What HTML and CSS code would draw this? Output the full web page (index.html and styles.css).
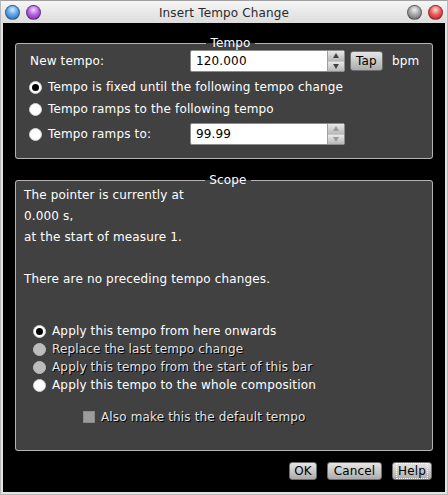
FILE: index.html
```html
<!DOCTYPE html>
<html lang="en">
<head>
  <meta charset="UTF-8">
  <title>Insert Tempo Change</title>
  <link rel="stylesheet" href="styles.css">
</head>
<body>
  <div class="window">
    <div class="titlebar">
      <div class="lights">
        <span class="light blue"></span>
        <span class="light purple"></span>
      </div>
      <div class="title">Insert Tempo Change</div>
      <div class="lights">
        <span class="light grey"></span>
        <span class="light red"></span>
      </div>
    </div>

    <div class="client">
      <fieldset class="group tempo">
        <legend>Tempo</legend>
        <div class="row row-first">
          <span class="label">New tempo:</span>
          <div class="spin">
            <span class="spin-value">120.000</span>
            <span class="spin-arrows"><i class="up"></i><i class="down"></i></span>
          </div>
          <span class="button tap">Tap</span>
          <span class="unit">bpm</span>
        </div>
        <div class="row radio-row">
          <span class="radio checked"></span>
          <span>Tempo is fixed until the following tempo change</span>
        </div>
        <div class="row radio-row">
          <span class="radio"></span>
          <span>Tempo ramps to the following tempo</span>
        </div>
        <div class="row row-last">
          <div class="radio-label">
            <span class="radio"></span>
            <span>Tempo ramps to:</span>
          </div>
          <div class="spin">
            <span class="spin-value">99.99</span>
            <span class="spin-arrows faded"><i class="up"></i><i class="down"></i></span>
          </div>
        </div>
      </fieldset>

      <fieldset class="group scope">
        <legend>Scope</legend>
        <div class="info">
          <p>The pointer is currently at</p>
          <p>0.000 s,</p>
          <p>at the start of measure 1.</p>
          <p>&nbsp;</p>
          <p>There are no preceding tempo changes.</p>
        </div>
        <div class="choices">
          <div class="choice"><span class="radio checked"></span><span>Apply this tempo from here onwards</span></div>
          <div class="choice disabled"><span class="radio"></span><span>Replace the last tempo change</span></div>
          <div class="choice disabled"><span class="radio"></span><span>Apply this tempo from the start of this bar</span></div>
          <div class="choice"><span class="radio"></span><span>Apply this tempo to the whole composition</span></div>
        </div>
        <div class="check disabled"><span class="box"></span><span>Also make this the default tempo</span></div>
      </fieldset>

      <div class="buttons">
        <span class="button ok">OK</span>
        <span class="button cancel">Cancel</span>
        <span class="button help"><span class="focus">Help</span></span>
      </div>
    </div>
  </div>
</body>
</html>
```

FILE: styles.css
```css
* {
  box-sizing: border-box;
}
body {
  margin: 0;
  background: #e4e4e4;
  font-family: "DejaVu Sans", sans-serif;
  font-size: 12px;
  letter-spacing: 0.15px;
  color: #fff;
}
.window {
  width: 448px;
  height: 495px;
  background: #e2e2e2;
  border-left: 1px solid #b8b8b8;
  border-right: 1px solid #b8b8b8;
  border-bottom: 1px solid #b8b8b8;
}
.titlebar {
  height: 23px;
  display: flex;
  align-items: center;
  justify-content: space-between;
  padding: 0 4px;
  background: linear-gradient(#f6f6f6, #dcdcdc);
  border-top: 1px solid #a0a0a0;
}
.title {
  color: #2a2a2a;
  font-size: 12px;
  padding-top: 2px;
}
.lights {
  display: flex;
  gap: 6px;
}
.light {
  width: 15px;
  height: 15px;
  border-radius: 50%;
  border: 1px solid rgba(0, 0, 0, 0.35);
}
.blue {
  background: radial-gradient(circle at 50% 30%, #d6ecff 0, #5fa6e6 45%, #1f5fae 100%);
}
.purple {
  background: radial-gradient(circle at 50% 30%, #f0d6ff 0, #b466e0 45%, #6c1fa0 100%);
}
.grey {
  background: radial-gradient(circle at 50% 30%, #f0f0f0 0, #a8a8a8 45%, #5a5a5a 100%);
}
.red {
  background: radial-gradient(circle at 50% 30%, #ffdada 0, #ee5a5a 45%, #a81a1a 100%);
}
.client {
  height: 469px;
  margin: 0 2px;
  background: #000;
  padding: 13px 12px 0 12px;
}
.group {
  margin: 0;
  border: 1px solid #b4b4b4;
  border-radius: 3px;
  background: #414141;
  min-width: 0;
}
.group legend {
  margin: 0 auto;
  padding: 0 4px;
  line-height: 14px;
  font-size: 12px;
}
.tempo {
  padding: 0 0 13px 13px;
}
.row {
  display: flex;
  align-items: center;
}
.row-first {
  height: 22px;
}
.row-first .label {
  width: 161px;
  padding-left: 1px;
}
.radio-row {
  height: 20px;
  margin-top: 2px;
}
.row-first + .radio-row {
  margin-top: 5px;
}
.row-last {
  height: 22px;
  margin-top: 4px;
}
.radio-label {
  width: 161px;
  display: flex;
  align-items: center;
}
.radio {
  width: 13px;
  height: 13px;
  flex: none;
  margin-right: 6px;
  border-radius: 50%;
  background: #fff;
  border: 1px solid #d0d0d0;
  display: flex;
  align-items: center;
  justify-content: center;
}
.radio.checked::after {
  content: "";
  width: 7px;
  height: 7px;
  border-radius: 50%;
  background: #000;
}
.spin {
  width: 155px;
  height: 22px;
  display: flex;
  background: #fff;
  border: 1px solid #8c8c8c;
  border-radius: 2px;
  color: #000;
}
.spin-value {
  flex: 1;
  line-height: 20px;
  padding-left: 5px;
}
.spin-arrows {
  width: 17px;
  display: flex;
  flex-direction: column;
  border-left: 1px solid #a0a0a0;
}
.spin-arrows i {
  flex: 1;
  display: flex;
  align-items: center;
  justify-content: center;
  background: linear-gradient(#e8e8e8, #b8b8b8);
}
.spin-arrows i + i {
  border-top: 1px solid #c8c8c8;
}
.spin-arrows .up::after {
  content: "";
  border-left: 3px solid transparent;
  border-right: 3px solid transparent;
  border-bottom: 5px solid #444;
}
.spin-arrows .down::after {
  content: "";
  border-left: 3px solid transparent;
  border-right: 3px solid transparent;
  border-top: 5px solid #444;
}
.spin-arrows.faded .up::after {
  border-bottom-color: #9a9a9a;
}
.spin-arrows.faded .down::after {
  border-top-color: #9a9a9a;
}
.button {
  display: inline-flex;
  align-items: center;
  justify-content: center;
  height: 18px;
  border: 1px solid #6e6e6e;
  border-radius: 3px;
  background: linear-gradient(#e6e6e6, #acacac);
  color: #000;
}
.tap {
  width: 33px;
  height: 20px;
  margin-left: 5px;
}
.unit {
  margin-left: 9px;
}
.scope {
  margin-top: 14px;
  padding: 0 0 24px 8px;
}
.info {
  margin-top: -2px;
}
.info p {
  margin: 0;
  line-height: 21px;
}
.choices {
  margin-top: 32px;
  padding-left: 9px;
}
.choice {
  height: 18px;
  display: flex;
  align-items: center;
}
.disabled {
  color: #e4e4e4;
  text-shadow: 1px 1px 0 #000;
}
.disabled .radio {
  background: #bcbcbc;
  border-color: #bcbcbc;
}
.check {
  height: 18px;
  margin-top: 14px;
  padding-left: 59px;
  display: flex;
  align-items: center;
}
.box {
  width: 12px;
  height: 12px;
  margin-right: 6px;
  background: #9c9c9c;
  border: 1px solid #8a8a8a;
}
.buttons {
  display: flex;
  justify-content: flex-end;
  margin-top: 11px;
  padding-right: 1px;
}
.ok {
  width: 28px;
}
.cancel {
  width: 55px;
  margin-left: 10px;
}
.help {
  width: 40px;
  margin-left: 10px;
}
.focus {
  border: 1px dotted #fff;
  padding: 0 1px;
  line-height: 14px;
}
```
